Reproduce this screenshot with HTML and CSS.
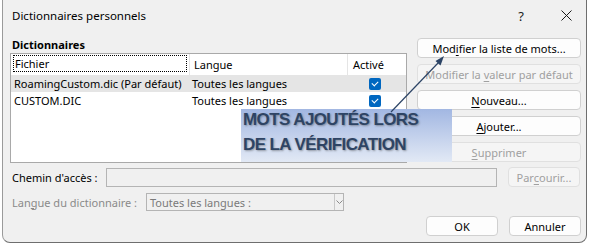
FILE: index.html
```html
<!DOCTYPE html>
<html lang="fr">
<head>
  <meta charset="UTF-8">
  <title>Dictionnaires personnels</title>
  <link rel="stylesheet" href="styles.css">
</head>
<body>
  <div class="window">
    <div class="titlebar">
      <span class="title">Dictionnaires personnels</span>
      <span class="help">?</span>
      <svg class="close" width="11" height="11" viewBox="0 0 11 11">
        <path d="M0.5 0.5 L10.5 10.5 M10.5 0.5 L0.5 10.5" stroke="#1a1a1a" stroke-width="1" fill="none"/>
      </svg>
    </div>

    <div class="content">
      <div class="top">
        <div class="dicts">
          <div class="group-label">Dictionnaires</div>
          <div class="list">
            <div class="list-head">
              <div class="col col-file"><span class="focus">Fichier</span></div>
              <div class="col col-lang">Langue</div>
              <div class="col col-on">Activé</div>
            </div>
            <div class="list-row selected">
              <div class="col col-file">RoamingCustom.dic (Par défaut)</div>
              <div class="col col-lang">Toutes les langues</div>
              <div class="col col-on"><span class="check"></span></div>
            </div>
            <div class="list-row">
              <div class="col col-file">CUSTOM.DIC</div>
              <div class="col col-lang">Toutes les langues</div>
              <div class="col col-on"><span class="check"></span></div>
            </div>
          </div>
        </div>

        <div class="actions">
          <button class="btn">Mod<u>i</u>fier la liste de mots...</button>
          <button class="btn" disabled>Modifier la <u>v</u>aleur par défaut</button>
          <button class="btn"><u>N</u>ouveau...</button>
          <button class="btn"><u>A</u>jouter...</button>
          <button class="btn" disabled><u>S</u>upprimer</button>
        </div>
      </div>

      <div class="path-row">
        <span class="label path-label">Chemin d'accès :</span>
        <div class="field path-field"></div>
        <button class="btn btn-small" disabled>Par<u>c</u>ourir...</button>
      </div>

      <div class="lang-row">
        <span class="label lang-label muted">Lan<u>g</u>ue du dictionnaire :</span>
        <div class="field select-field">
          <span class="select-text">Toutes les langues :</span>
          <span class="select-arrow">
            <svg width="7" height="5" viewBox="0 0 7 5"><path d="M0.5 0.5 L3.5 3.5 L6.5 0.5" stroke="#8a8a8a" fill="none"/></svg>
          </span>
        </div>
      </div>

      <div class="footer">
        <button class="btn btn-small">OK</button>
        <button class="btn btn-small">Annuler</button>
      </div>
    </div>

    <!-- callout pasted over the dialog -->
    <div class="callout">
      <div class="callout-text">MOTS AJOUTÉS LORS<br>DE LA VÉRIFICATION</div>
    </div>
    <svg class="arrow" width="590" height="246" viewBox="0 0 590 246">
      <line x1="391" y1="112" x2="439" y2="62" stroke="#2c4466" stroke-width="1.2"/>
      <path d="M444 56 L435.5 61 L440.5 65.5 Z" fill="#2c4466"/>
    </svg>
  </div>
</body>
</html>
```

FILE: styles.css
```css
* {
  box-sizing: border-box;
}

body {
  margin: 0;
  background-color: #ffffff;
  font-family: "Noto Sans", "Open Sans", sans-serif;
  font-size: 11px;
  color: #000000;
  overflow: hidden;
}

.window {
  position: relative;
  margin: -9px 0 0 2px;
  width: 585px;
  height: 252px;
  background-color: #f0f0f0;
  border: 1px solid #6e6e6e;
  border-left-color: #9a9a9a;
  border-radius: 8px;
}

.titlebar {
  height: 44px;
  display: flex;
  align-items: center;
  padding: 11px 0 8px 9px;
}

.title {
  flex: 1;
  font-size: 11.5px;
}

.help {
  font-size: 13px;
  margin-right: 37px;
  color: #1a1a1a;
}

.close {
  margin-right: 14px;
}

.content {
  padding: 0 4px 0 7px;
}

.top {
  display: flex;
  gap: 10px;
}

.dicts {
  width: 397px;
}

.group-label {
  height: 17px;
  line-height: 17px;
  font-weight: bold;
  padding-left: 2px;
  font-size: 11px;
}

.list {
  height: 110px;
  background-color: #ffffff;
  border: 1px solid #a9a9a9;
}

.list-head,
.list-row {
  display: flex;
  white-space: nowrap;
}

.list-head {
  height: 21px;
  line-height: 19px;
}

.list-row {
  height: 17px;
  line-height: 17px;
}

.list-row.selected {
  background-color: #e5e5e5;
}

.col-file {
  width: 179px;
  padding-left: 3px;
}

.col-lang {
  width: 158px;
  padding-left: 2px;
}

.col-on {
  flex: 1;
  padding-left: 5px;
}

.list-head .col {
  border-right: 1px solid #e5e5e5;
  padding-top: 1px;
}

.list-head .col-file {
  padding-left: 2px;
  padding-right: 2px;
}

.list-head .col-lang {
  padding-left: 4px;
}

.list-head .col-on {
  border-right: none;
}

.focus {
  display: block;
  height: 17px;
  line-height: 15px;
  padding-left: 1px;
  border: 1px dotted #000000;
}

.list-row .col-on {
  display: flex;
  align-items: center;
  padding-left: 21px;
}

.check {
  display: block;
  width: 12px;
  height: 12px;
  border-radius: 2px;
  background-color: #0067c0;
  position: relative;
}

.check::after {
  content: "";
  position: absolute;
  left: 3px;
  top: 3px;
  width: 5px;
  height: 3px;
  border-left: 1px solid #ffffff;
  border-bottom: 1px solid #ffffff;
  transform: rotate(-45deg);
}

.actions {
  display: flex;
  flex-direction: column;
  gap: 6px;
  padding-top: 2px;
}

.btn {
  width: 164px;
  height: 20px;
  padding: 0;
  font-family: inherit;
  font-size: 11px;
  color: #000000;
  background-color: #fdfdfd;
  border: 1px solid #d0d0d0;
  border-radius: 4px;
  line-height: 17px;
  white-space: nowrap;
}

.btn:disabled {
  color: #a0a0a0;
  background-color: #f5f5f5;
  border-color: #e0e0e0;
}

.btn u {
  text-underline-offset: 2px;
}

.btn-small {
  width: 72px;
}

.label {
  padding-left: 2px;
  white-space: nowrap;
}

.path-label {
  width: 96px;
}

.lang-label {
  width: 136px;
}

.muted {
  color: #8a8a8a;
}

.path-row {
  display: flex;
  align-items: center;
  margin-top: 4px;
  height: 20px;
}

.path-field {
  width: 391px;
  height: 19px;
  margin-right: 11px;
}

.field {
  border: 1px solid #b4b4b4;
  background-color: #f0f0f0;
}

.lang-row {
  display: flex;
  align-items: center;
  margin-top: 6px;
  height: 18px;
}

.select-field {
  width: 198px;
  height: 18px;
  display: flex;
  align-items: center;
}

.select-text {
  flex: 1;
  padding-left: 3px;
  color: #7a7a7a;
}

.select-arrow {
  width: 9px;
  height: 16px;
  border-left: 1px solid #c8c8c8;
  display: flex;
  align-items: center;
  justify-content: center;
}

.footer {
  display: flex;
  justify-content: flex-end;
  gap: 11px;
  margin-top: 5px;
  padding-right: 1px;
}

.callout {
  position: absolute;
  left: 238px;
  top: 117px;
  width: 211px;
  height: 53px;
  background: linear-gradient(to bottom, #a2b7e2, #e2e9f5);
  padding-left: 2px;
}

.callout-text {
  font-family: "Liberation Sans", Arial, sans-serif;
  font-weight: bold;
  font-size: 17px;
  line-height: 25px;
  letter-spacing: -0.6px;
  margin-top: -2px;
  color: #2e4464;
  text-shadow: 1px 1px 2px rgba(60, 60, 60, 0.45);
}

.arrow {
  position: absolute;
  left: -3px;
  top: 8px;
  pointer-events: none;
}
```
